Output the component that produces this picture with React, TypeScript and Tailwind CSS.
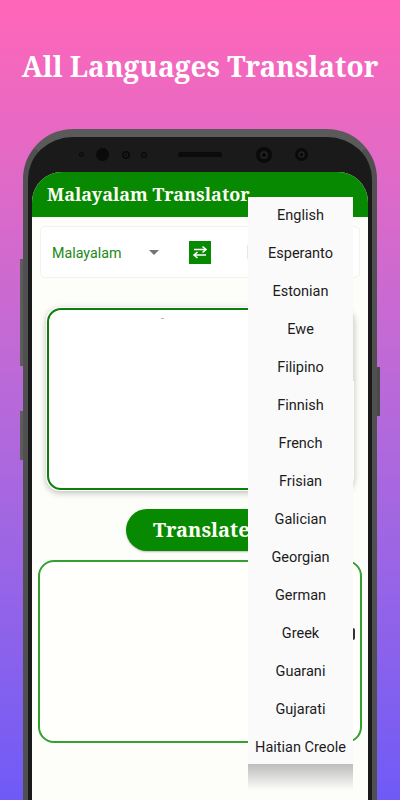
import React from "react";

const languages = [
  "English",
  "Esperanto",
  "Estonian",
  "Ewe",
  "Filipino",
  "Finnish",
  "French",
  "Frisian",
  "Galician",
  "Georgian",
  "German",
  "Greek",
  "Guarani",
  "Gujarati",
  "Haitian Creole",
];

const serif = "font-['Noto_Serif','DejaVu_Serif',serif]";

const Lens = ({ size, className, plain }: { size: number; className?: string; plain?: boolean }) => (
  <svg width={size} height={size} viewBox="0 0 20 20" className={className}>
    <circle cx="10" cy="10" r="10" fill="#0a0a0a" />
    {!plain && <circle cx="10" cy="10" r="5" fill="#222222" />}
    {!plain && <circle cx="10" cy="10" r="2.5" fill="#050505" />}
  </svg>
);

export default function App() {
  return (
    <div className="flex h-[800px] w-[400px] flex-col items-center overflow-hidden bg-gradient-to-b from-[#ff66b8] to-[#6f5af6] pt-[43px] font-['Roboto',sans-serif]">
      <h1 className={`h-[86px] whitespace-nowrap ${serif} text-[28px] leading-[46px] font-bold text-white`}>
        All Languages Translator
      </h1>

      {/* phone frame */}
      <div className="relative flex w-[354px] flex-1 flex-col rounded-t-[50px] border-x-[5px] border-t-[8px] border-x-[#505050] border-t-[#5a5a5a] bg-[#1a1a1a] px-[4px]">
        <div className="absolute top-[122px] -left-[8px] h-[107px] w-[3px] bg-[#5c5c5c]" />
        <div className="absolute top-[274px] -left-[8px] h-[49px] w-[3px] bg-[#5c5c5c]" />
        <div className="absolute top-[230px] -right-[8px] h-[49px] w-[3px] bg-[#4a4a4a]" />

        {/* camera strip */}
        <div className="flex h-[35px] shrink-0 items-center pl-[47px]">
          <Lens size={5} />
          <Lens size={13} plain className="ml-[12px]" />
          <Lens size={8} className="ml-[13px]" />
          <Lens size={6} className="ml-[11px]" />
          <div className="ml-[31px] h-[5px] w-[44px] rounded-full bg-[#0b0b0b]" />
          <Lens size={16} className="ml-[34px]" />
          <Lens size={13} className="ml-[23px]" />
        </div>

        {/* screen */}
        <div className="flex flex-1 flex-col rounded-t-[30px] bg-[#fdfefa]">
          <div className={`flex h-[45px] shrink-0 items-center rounded-t-[30px] bg-[#078a02] pb-[1px] pl-[15px] ${serif} text-[18px] font-bold text-[#fdfdf5]`}>
            Malayalam Translator
          </div>

          <div className="mx-[8px] mt-[9px] flex h-[52px] items-center rounded-[5px] border border-[#f2f3ee] bg-white pl-[11px]">
            <span className="w-[97px] pt-[3px] text-[14.25px] text-[#1a8a14]">Malayalam</span>
            <span className="h-0 w-0 border-x-[5px] border-t-[5px] border-x-transparent border-t-[#757575]" />
            <div className="ml-[30px] flex h-[23px] w-[22px] items-center justify-center bg-[#078a02]">
              <svg width="18" height="14" viewBox="0 0 18 14" fill="none" stroke="#ffffff" strokeWidth="1.6">
                <path d="M3 4.5h12M11.5 1.5 15 4.5l-3.5 3" />
                <path d="M15 10H3M6.5 7 3 10l3.5 3" />
              </svg>
            </div>
            <div className="ml-[36px] h-[14px] w-[1px] bg-[#dcefdc]" />
          </div>

          <div className="relative mx-[14px] mt-[29px] h-[184px] rounded-[14px] bg-white p-[1px] shadow-[0_2px_6px_rgba(0,0,0,0.25)]">
            <div className="h-full rounded-[14px] border-[2px] border-[#0c7f08] bg-white" />
            <div className="absolute top-[11px] left-[115px] h-[1px] w-[3px] bg-[#b5b5b5]" />
          </div>

          <div className="mt-[18px] ml-[94px] flex h-[42px] w-[180px] items-center rounded-full bg-[#078a02] pl-[27px] shadow-[0_1px_2px_rgba(0,0,0,0.25)]">
            <span className={`${serif} text-[20px] font-bold text-[#fdfdf5]`}>Translate</span>
          </div>

          <div className="relative mx-[6px] mt-[9px] h-[183px] rounded-[16px] border-[2px] border-[#35a032] bg-[#fffffb]">
            <div className="absolute top-[66px] right-[5px] h-[12px] w-[2px] rounded-r-full bg-[#333333]" />
          </div>
        </div>

        {/* language dropdown */}
        <div className="absolute top-[60px] left-[220px] w-[105px]">
          <div className="absolute top-[118px] -right-[1px] h-[66px] w-[1px] bg-[#dcdedc]" />
          <ul className="h-[567px] overflow-hidden bg-[#fafafb]">
            {languages.map((name) => (
              <li key={name} className="flex h-[38px] items-center justify-center text-[14.5px] whitespace-nowrap text-[#1c1c1c]">
                {name}
              </li>
            ))}
          </ul>
          <div className="h-[26px] bg-gradient-to-b from-[#bcbcbc] to-[#fdfefa]" />
        </div>
      </div>
    </div>
  );
}
